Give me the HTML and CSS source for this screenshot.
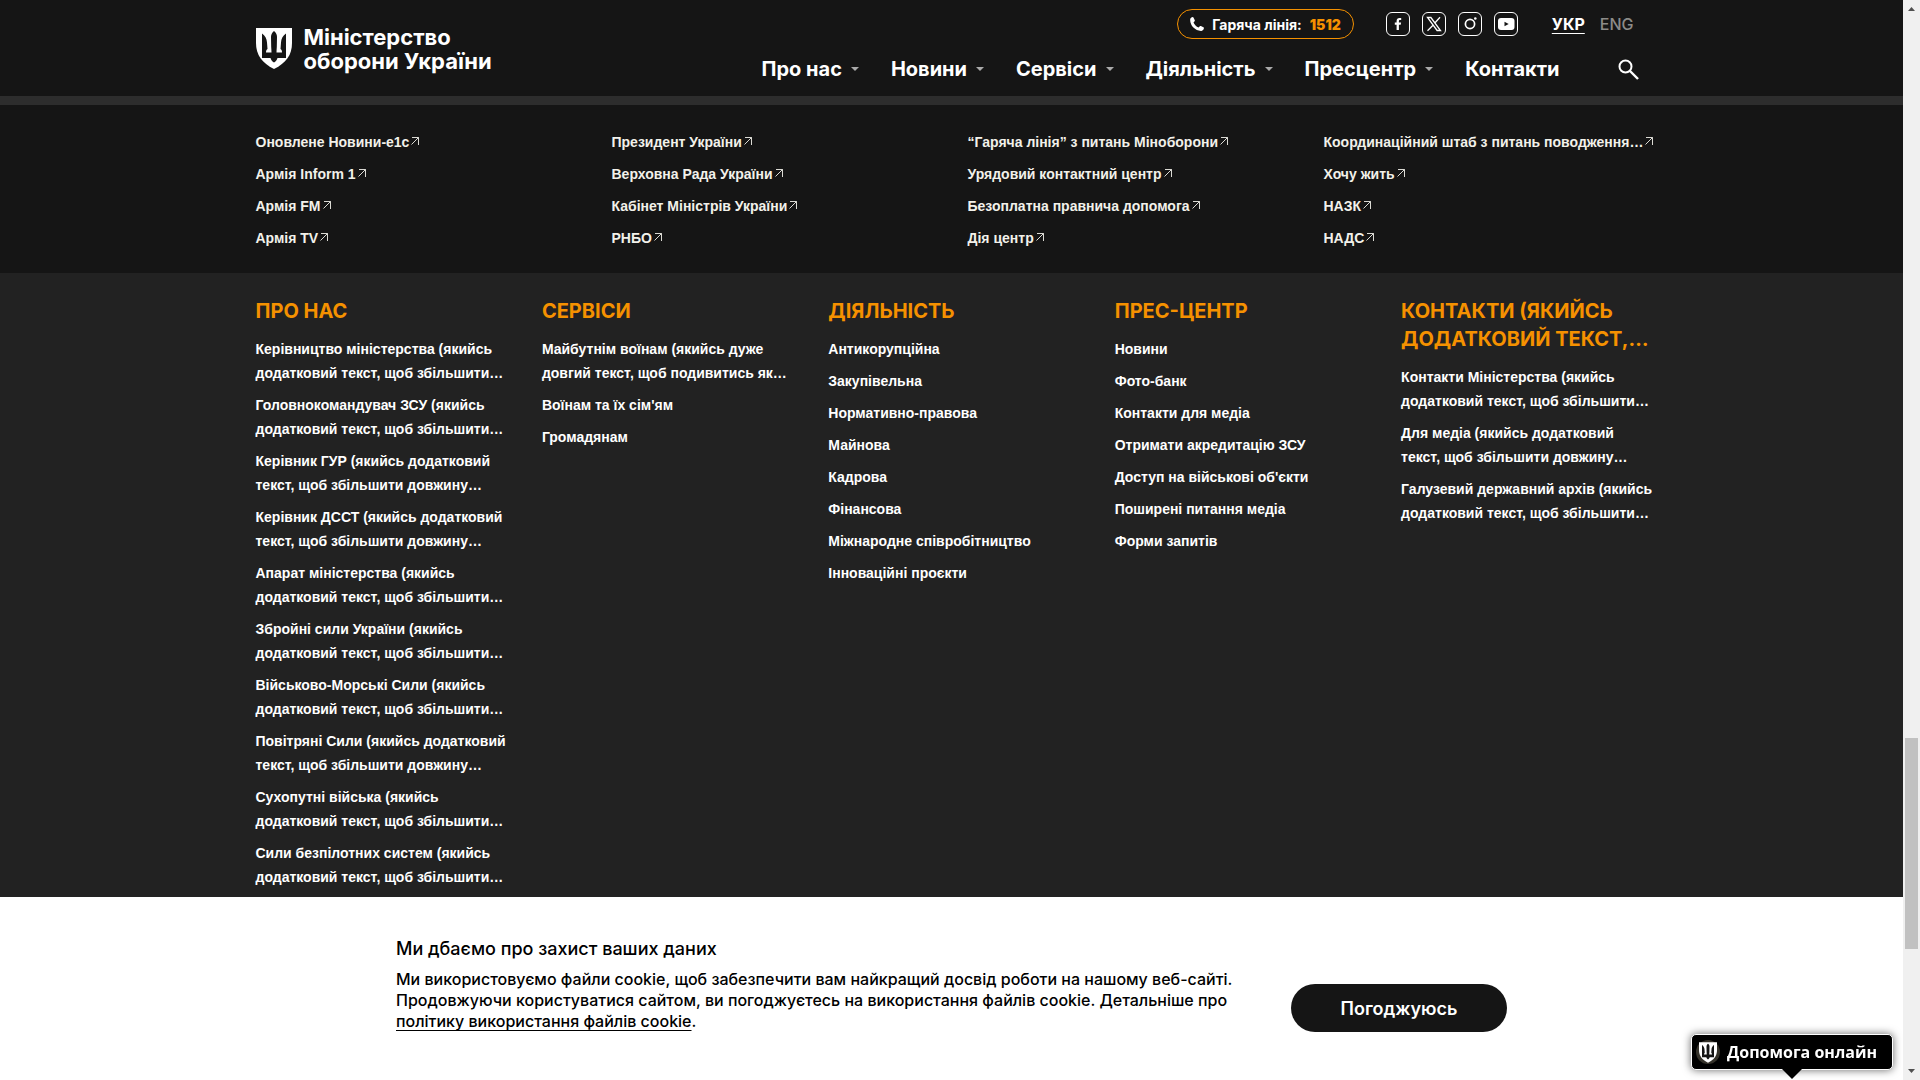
FILE: index.html
```
<!DOCTYPE html>
<html lang="uk">
<head>
<meta charset="utf-8">
<title>Міністерство оборони України</title>
<link rel="stylesheet" href="styles.css">
</head>
<body>
<svg class="sprite" aria-hidden="true">
  <symbol id="arrow" viewBox="0 0 8 8"><path d="M1 .5h6.500V8M7.500.5L.5 7.500" fill="none" stroke="currentColor" stroke-width=".9"/></symbol>
  <symbol id="caret" viewBox="0 0 8 4"><path d="M0 0h8L4 4z" fill="currentColor"/></symbol>
  <symbol id="shield" viewBox="0 0 36 41">
    <path d="M0 0h36v15c0 12-6 20-18 26C6 35 0 27 0 15z" fill="#fff"/>
    <path d="M6 5.500c3 2 4.800 5 5 9l.5 6.500c-1 .6-1.500 1.700-1.500 3.500h5.500c0-2-.2-3.500-.3-5.500L15 9c0-2.500 1-4.500 3-6 2 1.500 3 3.500 3 6l-.2 10c-.1 2-.3 3.500-.3 5.500H26c0-1.800-.5-2.900-1.500-3.500l.5-6.500c.2-4 2-7 5-9V30h-8.500c-.7 2-1.800 3.500-3.500 4.500-1.700-1-2.800-2.500-3.500-4.500H6z" fill="#151515"/>
  </symbol>
</svg>

<div class="page">
  <header class="header">
    <div class="container header-inner">
      <a class="logo" href="#">
        <svg class="logo-mark"><use href="#shield"/></svg>
        <span>Міністерство<br>оборони України</span>
      </a>
      <div class="header-side">
        <div class="topbar">
          <a class="hotline" href="#">
            <svg width="14" height="14" viewBox="0 0 14 14"><path d="M.2 2.200C.5 1 1.500.2 2.600.1c.5 0 .8.200 1 .6l1.200 2.500c.2.400.1.800-.2 1.100L3.500 5.400c1 2.300 2.700 4 5.100 5.100l1.200-1.200c.3-.3.700-.4 1.100-.2l2.500 1.200c.4.200.6.500.5 1-.2 1.300-1.200 2.300-2.500 2.600C5.200 14.200-.4 8.300.2 2.200z" fill="#fff"/></svg>
            <span>Гаряча лінія:</span><strong>1512</strong>
          </a>
          <div class="socials">
            <a href="#" aria-label="Facebook"><svg viewBox="0 0 24 24"><rect x=".5" y=".5" width="23" height="23" rx="5.500"/><path class="solid" d="M10.600 18v-5.300H8.800v-2.200h1.800V9c0-2 1.100-3.100 2.900-3.100.7 0 1.300.1 1.700.2v1.900h-1.100c-.9 0-1.200.4-1.200 1.200v1.300h2.200l-.4 2.200h-1.800V18z"/></svg></a>
            <a href="#" aria-label="X"><svg viewBox="0 0 24 24"><rect x=".5" y=".5" width="23" height="23" rx="5.500"/><path d="M5.500 5.500h3.400l9.600 13h-3.400zM18 5.300l-5.400 6M11 13.200l-5.500 5.500" stroke-width="1.300"/></svg></a>
            <a href="#" aria-label="Instagram"><svg viewBox="0 0 24 24"><rect x=".5" y=".5" width="23" height="23" rx="5.500"/><circle cx="12" cy="12" r="4.600" stroke-width="1.700"/><circle class="solid" cx="17.300" cy="6.500" r="1.300"/></svg></a>
            <a href="#" aria-label="YouTube"><svg viewBox="0 0 24 24"><rect x=".5" y=".5" width="23" height="23" rx="5.500"/><rect class="solid" x="4" y="6" width="16.500" height="12" rx="3"/><path d="M10.500 9.800l4.200 2.200-4.200 2.200z" fill="#151515" stroke="none"/></svg></a>
          </div>
          <div class="languages"><a class="current" href="#">УКР</a><a href="#">ENG</a></div>
        </div>
        <div class="menu-row">
          <nav class="menu">
            <a href="#">Про нас<svg><use href="#caret"/></svg></a>
            <a href="#">Новини<svg><use href="#caret"/></svg></a>
            <a href="#">Сервіси<svg><use href="#caret"/></svg></a>
            <a href="#">Діяльність<svg><use href="#caret"/></svg></a>
            <a href="#">Пресцентр<svg><use href="#caret"/></svg></a>
            <a href="#">Контакти</a>
          </nav>
          <button class="search" type="button" aria-label="Пошук"><svg width="21" height="21" viewBox="0 0 21 21" fill="none" stroke="#fff" stroke-width="2"><circle cx="7.500" cy="7.500" r="6"/><path d="M12 12l8 8" stroke-width="2.400"/></svg></button>
        </div>
      </div>
    </div>
  </header>

  <section class="partners">
    <div class="container partners-grid">
      <ul>
        <li><a href="#">Оновлене Новини-e1c<svg><use href="#arrow"/></svg></a></li>
        <li><a href="#">Армія Inform 1<svg><use href="#arrow"/></svg></a></li>
        <li><a href="#">Армія FM<svg><use href="#arrow"/></svg></a></li>
        <li><a href="#">Армія TV<svg><use href="#arrow"/></svg></a></li>
      </ul>
      <ul>
        <li><a href="#">Президент України<svg><use href="#arrow"/></svg></a></li>
        <li><a href="#">Верховна Рада України<svg><use href="#arrow"/></svg></a></li>
        <li><a href="#">Кабінет Міністрів України<svg><use href="#arrow"/></svg></a></li>
        <li><a href="#">РНБО<svg><use href="#arrow"/></svg></a></li>
      </ul>
      <ul>
        <li><a href="#">“Гаряча лінія” з питань Міноборони<svg><use href="#arrow"/></svg></a></li>
        <li><a href="#">Урядовий контактний центр<svg><use href="#arrow"/></svg></a></li>
        <li><a href="#">Безоплатна правнича допомога<svg><use href="#arrow"/></svg></a></li>
        <li><a href="#">Дія центр<svg><use href="#arrow"/></svg></a></li>
      </ul>
      <ul>
        <li><a href="#">Координаційний штаб з питань поводження…<svg><use href="#arrow"/></svg></a></li>
        <li><a href="#">Хочу жить<svg><use href="#arrow"/></svg></a></li>
        <li><a href="#">НАЗК<svg><use href="#arrow"/></svg></a></li>
        <li><a href="#">НАДС<svg><use href="#arrow"/></svg></a></li>
      </ul>
    </div>
  </section>

  <footer class="footer">
    <div class="container footer-grid">
      <section>
        <h2>ПРО НАС</h2>
        <ul>
          <li><a href="#">Керівництво міністерства (якийсь<br>додатковий текст, щоб збільшити…</a></li>
          <li><a href="#">Головнокомандувач ЗСУ (якийсь<br>додатковий текст, щоб збільшити…</a></li>
          <li><a href="#">Керівник ГУР (якийсь додатковий<br>текст, щоб збільшити довжину…</a></li>
          <li><a href="#">Керівник ДССТ (якийсь додатковий<br>текст, щоб збільшити довжину…</a></li>
          <li><a href="#">Апарат міністерства (якийсь<br>додатковий текст, щоб збільшити…</a></li>
          <li><a href="#">Збройні сили України (якийсь<br>додатковий текст, щоб збільшити…</a></li>
          <li><a href="#">Військово-Морські Сили (якийсь<br>додатковий текст, щоб збільшити…</a></li>
          <li><a href="#">Повітряні Сили (якийсь додатковий<br>текст, щоб збільшити довжину…</a></li>
          <li><a href="#">Сухопутні війська (якийсь<br>додатковий текст, щоб збільшити…</a></li>
          <li><a href="#">Сили безпілотних систем (якийсь<br>додатковий текст, щоб збільшити…</a></li>
        </ul>
      </section>
      <section>
        <h2>СЕРВІСИ</h2>
        <ul>
          <li><a href="#">Майбутнім воїнам (якийсь дуже<br>довгий текст, щоб подивитись як…</a></li>
          <li><a href="#">Воїнам та їх сім'ям</a></li>
          <li><a href="#">Громадянам</a></li>
        </ul>
      </section>
      <section>
        <h2>ДІЯЛЬНІСТЬ</h2>
        <ul>
          <li><a href="#">Антикорупційна</a></li>
          <li><a href="#">Закупівельна</a></li>
          <li><a href="#">Нормативно-правова</a></li>
          <li><a href="#">Майнова</a></li>
          <li><a href="#">Кадрова</a></li>
          <li><a href="#">Фінансова</a></li>
          <li><a href="#">Міжнародне співробітництво</a></li>
          <li><a href="#">Інноваційні проєкти</a></li>
        </ul>
      </section>
      <section>
        <h2>ПРЕС-ЦЕНТР</h2>
        <ul>
          <li><a href="#">Новини</a></li>
          <li><a href="#">Фото-банк</a></li>
          <li><a href="#">Контакти для медіа</a></li>
          <li><a href="#">Отримати акредитацію ЗСУ</a></li>
          <li><a href="#">Доступ на військові об'єкти</a></li>
          <li><a href="#">Поширені питання медіа</a></li>
          <li><a href="#">Форми запитів</a></li>
        </ul>
      </section>
      <section>
        <h2>КОНТАКТИ (ЯКИЙСЬ<br>ДОДАТКОВИЙ ТЕКСТ,…</h2>
        <ul>
          <li><a href="#">Контакти Міністерства (якийсь<br>додатковий текст, щоб збільшити…</a></li>
          <li><a href="#">Для медіа (якийсь додатковий<br>текст, щоб збільшити довжину…</a></li>
          <li><a href="#">Галузевий державний архів (якийсь<br>додатковий текст, щоб збільшити…</a></li>
        </ul>
      </section>
    </div>
  </footer>

  <section class="cookies">
    <div class="cookies-inner">
      <div>
        <h3>Ми дбаємо про захист ваших даних</h3>
        <p>Ми використовуємо файли cookie, щоб забезпечити вам найкращий досвід роботи на нашому веб-сайті. Продовжуючи користуватися сайтом, ви погоджуєтесь на використання файлів cookie. Детальніше про <a href="#">політику використання файлів cookie</a>.</p>
      </div>
      <button class="accept" type="button">Погоджуюсь</button>
    </div>
  </section>
</div>

<div class="scrollbar" aria-hidden="true">
  <svg viewBox="0 0 17 17"><path d="M5 11h7L8.500 7z"/></svg>
  <div class="track"><div class="thumb"></div></div>
  <svg viewBox="0 0 17 17"><path d="M5 6h7l-3.500 4z"/></svg>
</div>

<button class="help" type="button"><span class="help-mark"><svg><use href="#shield"/></svg></span>Допомога онлайн</button>
</body>
</html>
```
FILE: styles.css
```
* { box-sizing: border-box; }
body {
  margin: 0;
  display: grid;
  grid-template-columns: 1fr 17px;
  font-family: Inter, "Liberation Sans", sans-serif;
  color: #fff;
  background: #fff;
}
a { color: inherit; text-decoration: none; }
button { font: inherit; color: #fff; border: 0; cursor: pointer; }
ul { list-style: none; margin: 0; padding: 0; display: flex; flex-direction: column; gap: 8px; }
h2, h3, p { margin: 0; }
svg { display: block; flex: none; }
.sprite { position: absolute; width: 0; height: 0; }

.page { min-height: 100vh; display: flex; flex-direction: column; }
.container { width: 100%; max-width: 1392px; margin: 0 auto; }

.header { background: #151515; border-bottom: 9px solid #2d2d2d; }
.header-inner { display: flex; justify-content: space-between; padding: 9px 0 15px; }
.logo { display: flex; gap: 12px; padding-top: 16px; font-size: 22px; font-weight: 700; line-height: 24px; }
.logo-mark { width: 36px; height: 41px; margin-top: 3px; }
.header-side { display: flex; flex-direction: column; align-items: flex-end; gap: 18px; }
.topbar { display: flex; align-items: center; padding-right: 14px; }
.hotline {
  display: flex; align-items: center; gap: 8px;
  height: 30px; padding: 0 12px; margin-right: 32px;
  border: 1px solid #f59100; border-radius: 15px;
  font-size: 14px; font-weight: 700;
}
.hotline strong { color: #f59100; }
.socials { display: flex; gap: 12px; margin-right: 34px; }
.socials svg { width: 24px; height: 24px; fill: none; stroke: #fff; }
.socials .solid { fill: #fff; stroke: none; }
.languages { display: flex; gap: 15px; font-size: 16px; font-weight: 500; color: #8c8b88; }
.languages .current { color: #fff; font-weight: 700; text-decoration: underline; text-underline-offset: 3px; }
.menu-row { display: flex; align-items: center; gap: 49px; height: 24px; }
.menu { display: flex; gap: 32px; font-size: 20px; font-weight: 700; line-height: 24px; }
.menu a { display: flex; align-items: center; gap: 9px; }
.menu svg { width: 8px; height: 4px; color: #aaa; }
.search { padding: 0 9px; background: none; }

.partners { background: #151515; padding: 25px 0 23px; }
.partners-grid { display: grid; grid-template-columns: repeat(4, minmax(0, 1fr)); gap: 32px; }
.partners a, .footer li a { font: 700 14px/24px "Liberation Sans", Arial, sans-serif; white-space: nowrap; }
.partners a { display: flex; align-items: center; gap: 2px; color: #f2f1ea; }
.partners svg { width: 8px; height: 8px; margin-bottom: 2px; }

.footer { flex: 1; background: #222; padding-top: 24px; }
.footer-grid { display: grid; grid-template-columns: repeat(5, minmax(0, 1fr)); gap: 40px; }
.footer h2 { margin-bottom: 12px; color: #f59100; font-size: 20px; font-weight: 700; line-height: 28px; white-space: nowrap; }
.footer li a { display: block; }

.cookies { background: #fff; color: #000; padding: 40px 0 48px; }
.cookies-inner { display: flex; justify-content: space-between; align-items: flex-end; max-width: 1111px; margin: 0 auto; }
.cookies h3 { margin-bottom: 8px; font-size: 18px; font-weight: 500; line-height: 24px; }
.cookies p { max-width: 846px; font-size: 16px; font-weight: 500; line-height: 21px; }
.cookies p a { text-decoration: underline; text-underline-offset: 3px; }
.accept { width: 216px; height: 48px; border-radius: 24px; background: #151515; font-size: 18px; font-weight: 600; }

.scrollbar { position: sticky; top: 0; height: 100vh; display: flex; flex-direction: column; background: #f0f0f0; }
.scrollbar svg { width: 17px; height: 17px; fill: #505050; }
.track { flex: 1; display: grid; grid-template-rows: 721fr 211fr 114fr; padding: 0 2px; }
.thumb { grid-row: 2; background: #c1c1c1; }

.help {
  position: fixed; right: 27px; bottom: 10px;
  display: flex; align-items: center; gap: 7px;
  height: 36px; padding: 0 15px 0 4px;
  border: 1px solid #fff; border-radius: 5px;
  background: #000; box-shadow: 0 0 8px rgba(0, 0, 0, .6);
  font: 700 16px/24px "Open Sans", sans-serif;
}
.help::after {
  content: ""; position: absolute; left: 50%; top: 100%; margin-left: -10px;
  border: 10px solid transparent; border-top-color: #000; border-bottom: 0;
}
.help-mark { display: grid; place-items: center; width: 24px; height: 24px; border-radius: 50%; background: #35322a; }
.help-mark svg { width: 18px; height: 21px; }
```
